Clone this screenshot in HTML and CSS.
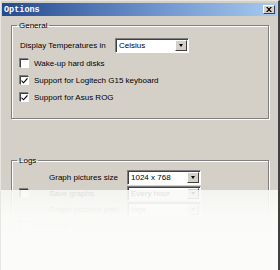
FILE: index.html
```html
<!DOCTYPE html>
<html lang="en">
<head>
    <meta charset="UTF-8">
    <title>Options</title>
    <link rel="stylesheet" href="styles.css">
</head>
<body>
    <div class="window">
        <div class="titlebar">
            <span class="title">Options</span>
            <span class="close">
                <svg width="6" height="5" viewBox="0 0 6 5"><path d="M0 0h1.5l1.5 1.5 1.5-1.5h1.5l-2.2 2.5 2.2 2.5h-1.5l-1.5-1.5-1.5 1.5h-1.5l2.2-2.5z" fill="#000"/></svg>
            </span>
        </div>

        <fieldset class="group general">
            <legend>General</legend>
            <div class="row">
                <span class="label">Display Temperatures in</span>
                <div class="combo">
                    <span class="value">Celsius</span>
                    <span class="drop"><i></i></span>
                </div>
            </div>
            <div class="check-row">
                <span class="box"></span>
                <span>Wake-up hard disks</span>
            </div>
            <div class="check-row">
                <span class="box checked"><svg width="7" height="7" viewBox="0 0 7 7"><path d="M0.5 3l2 2 4-4.5v1.8l-4 4.3-2-2z" fill="#000"/></svg></span>
                <span>Support for Logitech G15 keyboard</span>
            </div>
            <div class="check-row">
                <span class="box checked"><svg width="7" height="7" viewBox="0 0 7 7"><path d="M0.5 3l2 2 4-4.5v1.8l-4 4.3-2-2z" fill="#000"/></svg></span>
                <span>Support for Asus ROG</span>
            </div>
        </fieldset>

        <fieldset class="group logs">
            <legend>Logs</legend>
            <div class="row indent">
                <span class="label wide">Graph pictures size</span>
                <div class="combo">
                    <span class="value">1024 x 768</span>
                    <span class="drop"><i></i></span>
                </div>
            </div>
            <div class="row">
                <span class="box"></span>
                <span class="label pad">Save graphs</span>
                <div class="combo">
                    <span class="value">Every hour</span>
                    <span class="drop"><i></i></span>
                </div>
            </div>
            <div class="row indent">
                <span class="label wide">Graph pictures path</span>
                <div class="combo">
                    <span class="value">logs</span>
                    <span class="drop"><i></i></span>
                </div>
            </div>
            <div class="check-row">
                <span class="box"></span>
                <span>Log to file</span>
            </div>
        </fieldset>

        <div class="fade"></div>
    </div>
</body>
</html>
```

FILE: styles.css
```css
* {
    margin: 0;
    padding: 0;
    box-sizing: border-box;
}

body {
    background: #fff;
    font-family: "Liberation Sans", Arial, sans-serif;
    font-size: 8px;
    color: #000;
}

.window {
    position: relative;
    width: 280px;
    height: 270px;
    overflow: hidden;
    background: #d4d0c8;
    border-top: 1px solid #e8e6e0;
    border-left: 1px solid #e8e6e0;
    border-right: 2px solid #404040;
    padding: 2px 0 0 1px;
}

.titlebar {
    display: flex;
    align-items: center;
    justify-content: space-between;
    height: 13px;
    margin-right: 1px;
    padding: 0 2px 0 2px;
    background: linear-gradient(to right, #254a8e, #6d93cc 55%, #a6caf0);
}

.title {
    font-family: "Liberation Mono", "Courier New", monospace;
    font-weight: bold;
    font-size: 8.5px;
    color: #fff;
}

.close {
    display: flex;
    align-items: center;
    justify-content: center;
    width: 12px;
    height: 9px;
    background: #d4d0c8;
    border-top: 1px solid #fff;
    border-left: 1px solid #fff;
    border-right: 1px solid #404040;
    border-bottom: 1px solid #404040;
}

.group {
    width: 258px;
    margin-left: 9px;
    border: 1px solid #808080;
    box-shadow: 1px 1px 0 #fff, inset 1px 1px 0 #fff;
    padding: 0 0 0 8px;
}

.group legend {
    margin-left: -3px;
    padding: 0 2px;
    line-height: 9px;
}

.general {
    margin-top: 5px;
    height: 98px;
    padding-top: 5px;
}

.logs {
    margin-top: 37px;
    height: 120px;
    padding-top: 4px;
}

.row {
    display: flex;
    align-items: center;
    height: 16px;
}

.label {
    width: 95px;
    white-space: nowrap;
}

.indent {
    padding-left: 29px;
}

.wide {
    width: 78px;
}

.pad {
    width: 98px;
    padding-left: 20px;
}

.combo {
    display: flex;
    align-items: center;
    width: 74px;
    height: 15px;
    background: #fff;
    border-top: 1px solid #808080;
    border-left: 1px solid #808080;
    border-right: 1px solid #fff;
    border-bottom: 1px solid #fff;
    box-shadow: inset 1px 1px 0 #404040;
    padding: 1px 1px 1px 3px;
}

.value {
    flex: 1;
}

.drop {
    display: flex;
    align-items: center;
    justify-content: center;
    width: 12px;
    height: 11px;
    background: #d4d0c8;
    border-top: 1px solid #fff;
    border-left: 1px solid #fff;
    border-right: 1px solid #404040;
    border-bottom: 1px solid #404040;
}

.drop i {
    width: 0;
    height: 0;
    border-left: 2.5px solid transparent;
    border-right: 2.5px solid transparent;
    border-top: 3px solid #000;
}

.check-row {
    display: flex;
    align-items: center;
    gap: 5px;
    height: 17px;
}

.general .row {
    margin-top: 2px;
    margin-bottom: 2px;
}

.box {
    display: flex;
    align-items: center;
    justify-content: center;
    flex: none;
    width: 9px;
    height: 9px;
    background: #fff;
    border-top: 1px solid #404040;
    border-left: 1px solid #404040;
    border-right: 1px solid #fff;
    border-bottom: 1px solid #fff;
    box-shadow: -1px -1px 0 #808080;
}

.fade {
    position: absolute;
    left: -1px;
    right: -2px;
    top: 189px;
    bottom: 0;
    background: linear-gradient(rgba(248, 248, 246, 0.88), rgba(251, 251, 249, 0.97) 30%, #fbfbf9 55%);
}
```
